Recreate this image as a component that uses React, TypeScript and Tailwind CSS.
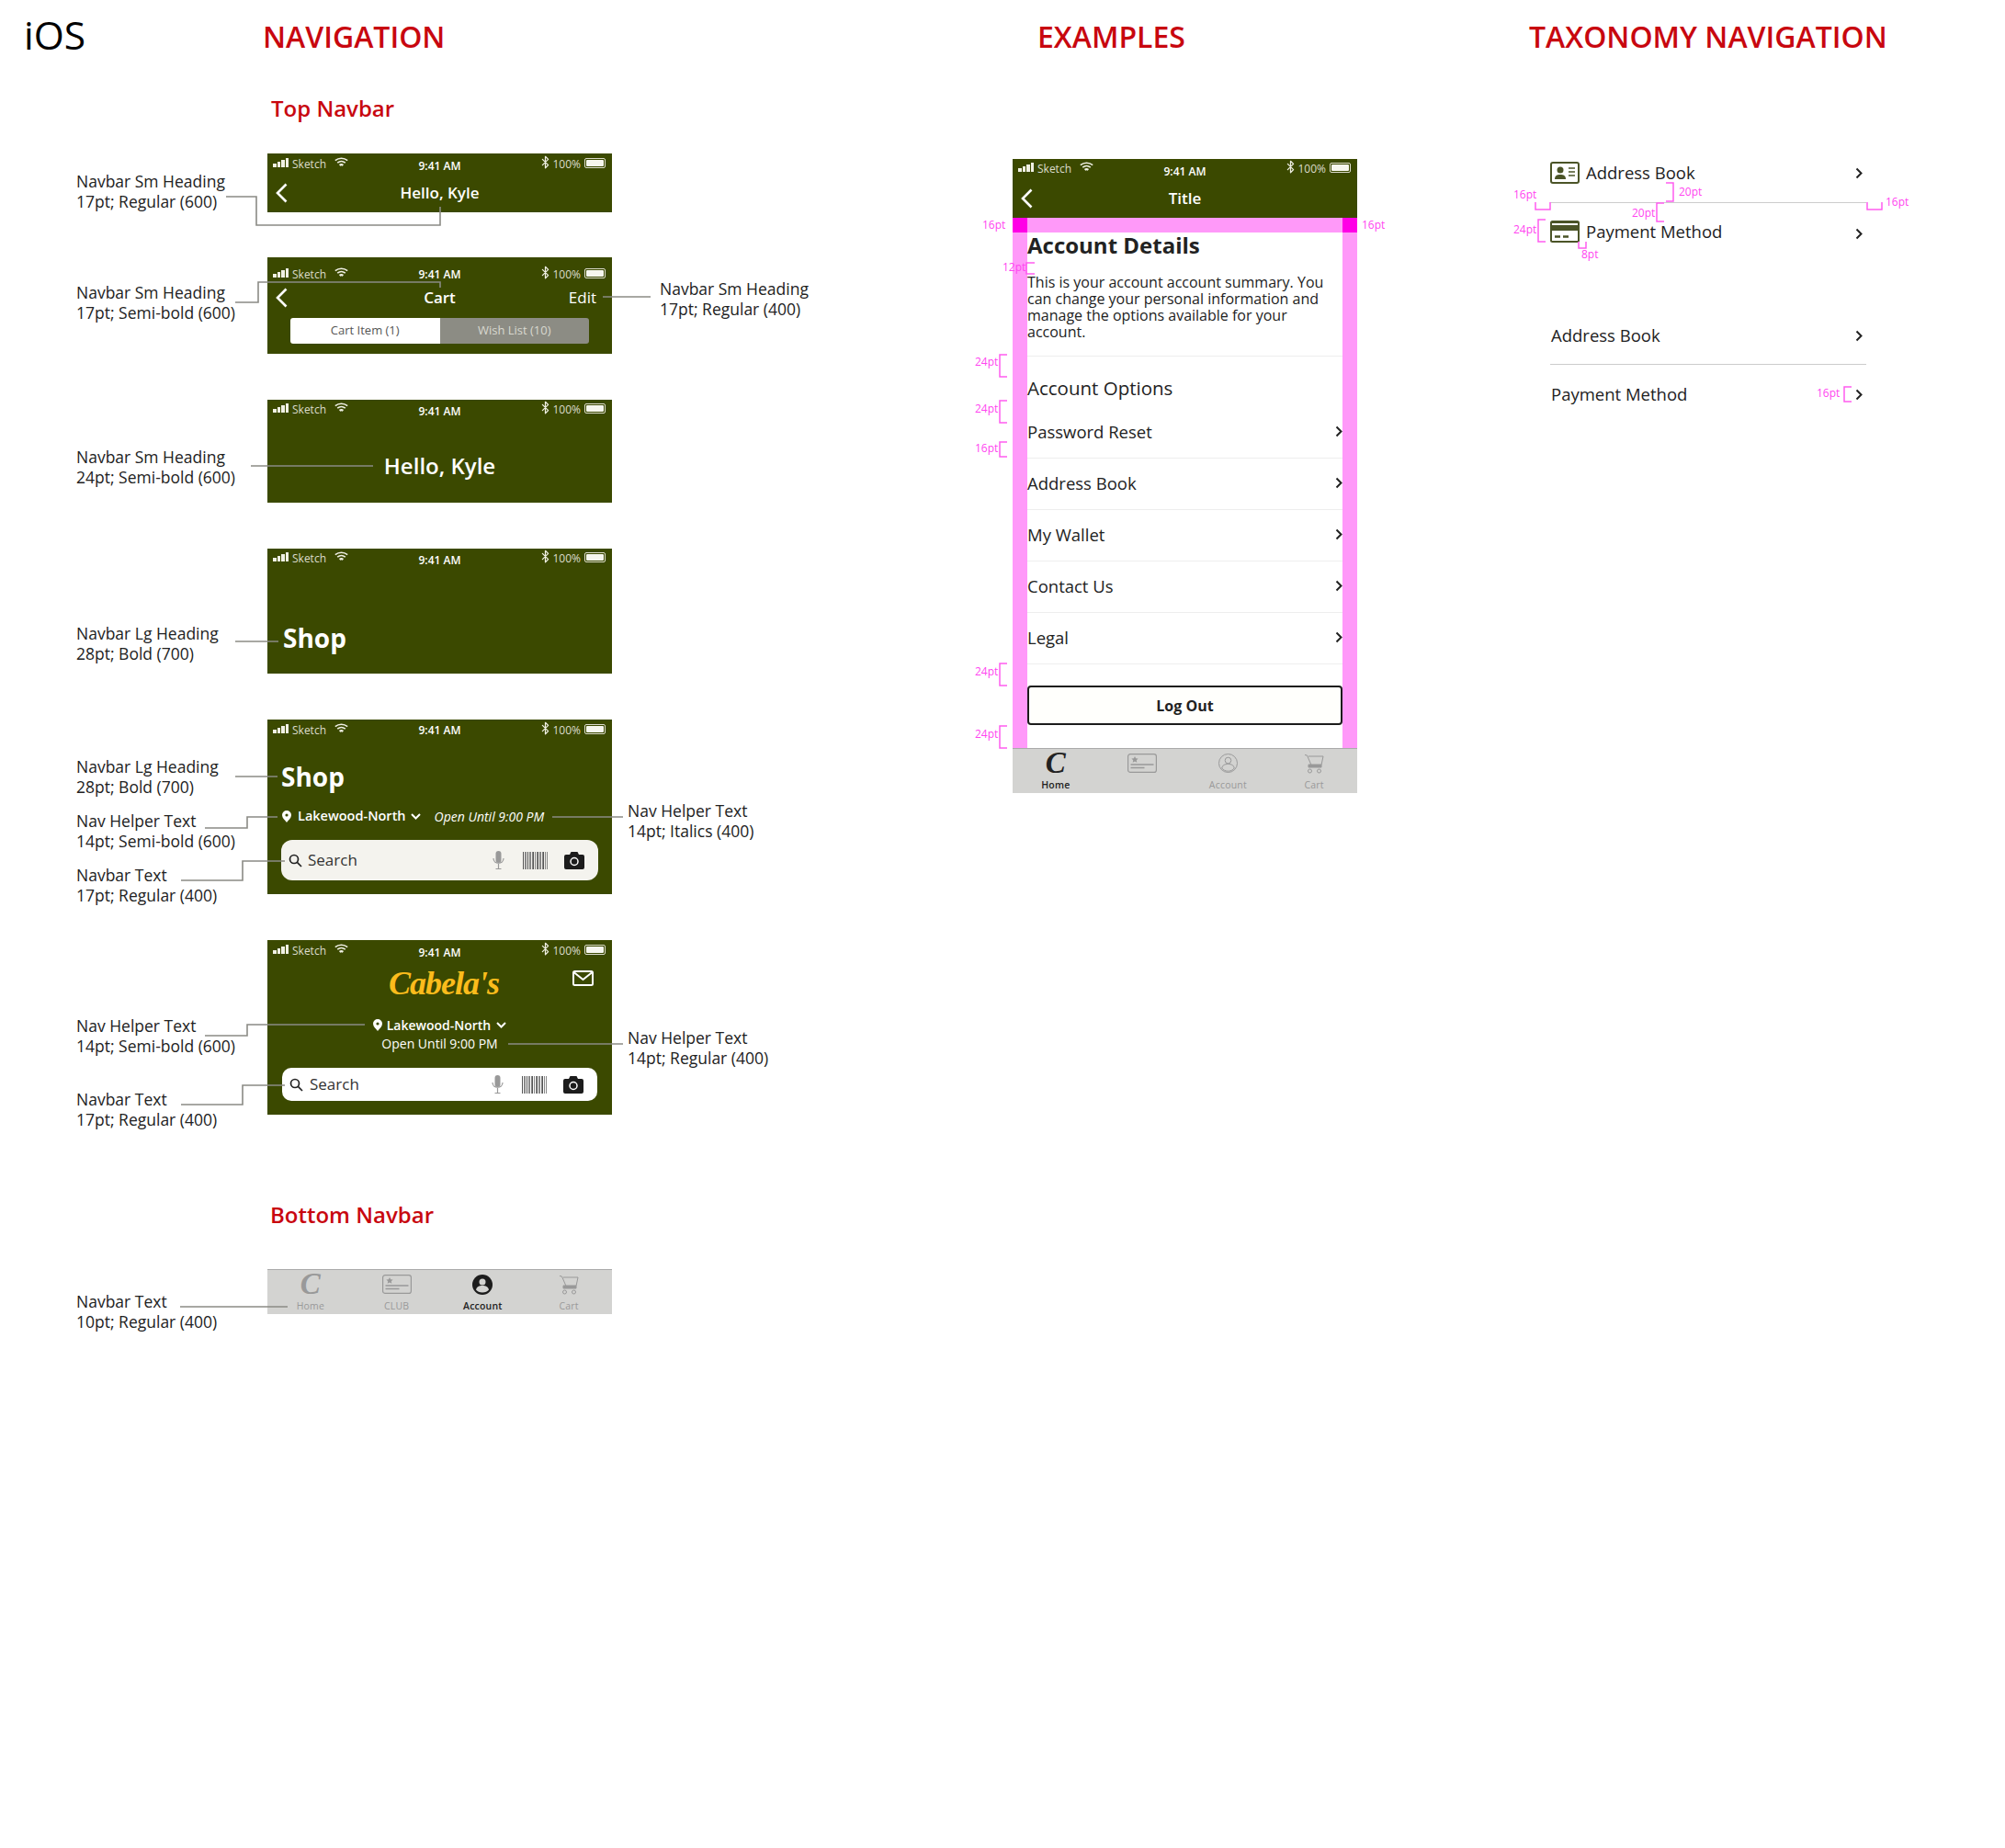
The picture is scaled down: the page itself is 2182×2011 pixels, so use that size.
import { Bluetooth } from 'lucide-react';
import { ReactNode } from 'react';

const LEADERS = [
  '246,214 279,214 279,245 479,245 479,225',
  '256,329 281,329 281,307 479,307 479,313',
  '656,323 708,323',
  '273,507 406,507',
  '256,698 303,698',
  '256,845 302,845',
  '223,901 269,901 269,889 302,889',
  '197,958 264,958 264,937 310,937',
  '601,889 678,889',
  '223,1127 269,1127 269,1115 397,1115',
  '197,1202 264,1202 264,1181 310,1181',
  '553,1136 678,1136',
  '196,1422 313,1422',
];

const BRACKETS = [
  'M1126 286H1117V298H1126',
  'M1096 386H1088V410H1096',
  'M1096 436H1088V460H1096',
  'M1096 481H1088V497H1096',
  'M1096 722H1088V746H1096',
  'M1096 790H1088V814H1096',
  'M1671 220V228H1687V220',
  'M1813 199H1821V219H1813',
  'M1811 221H1803V241H1811',
  'M2032 220V228H2048V220',
  'M1682 239H1674V263H1682',
  'M1718 263V270H1726V263',
  'M2015 421H2007V437H2015',
];

const ACCOUNT_ROWS = ['Password Reset', 'Address Book', 'My Wallet', 'Contact Us', 'Legal'];
const BARCODE = [2, 1, 1, 2, 1, 1, 1, 2, 1, 1, 2, 1, 1, 1, 2, 1, 1];

function Chevron({ className = '' }: { className?: string }) {
  return (
    <svg width="8" height="13" viewBox="0 0 8 13" className={className}>
      <path d="M1.5 1.5 6.5 6.5 1.5 11.5" fill="none" stroke="#222" strokeWidth="2" />
    </svg>
  );
}

function BackArrow() {
  return (
    <svg width="13" height="22" viewBox="0 0 13 22">
      <path d="M11.5 1.5 2 11l9.5 9.5" fill="none" stroke="#fff" strokeWidth="2.6" />
    </svg>
  );
}

function Wifi() {
  return (
    <svg width="15" height="11" viewBox="0 0 15 11" fill="none" stroke="#f0f0e4" strokeWidth="1.6">
      <path d="M.8 3.600c3.900-3.200 9.500-3.200 13.400 0" />
      <path d="M3.200 6.200c2.500-2 6.100-2 8.600 0" />
      <path d="M5.600 8.800c1.100-.8 2.700-.8 3.800 0" strokeWidth="2.200" />
    </svg>
  );
}

function StatusBar({ pad = 'pt-[2px]', time = 'mt-[2px]' }: { pad?: string; time?: string }) {
  return (
    <div className={`h-[24px] shrink-0 grid grid-cols-3 items-start text-[12px] text-[#dcdccc] ${pad}`}>
      <div className="flex items-center h-[20px] pl-[6px]">
        <div className="flex items-end gap-[1px] h-[10px] -mt-[4px]">
          <span className="w-[3.500px] h-[4px] bg-[#f0f0e4]" />
          <span className="w-[3.500px] h-[6px] bg-[#f0f0e4]" />
          <span className="w-[3.500px] h-[8px] bg-[#f0f0e4]" />
          <span className="w-[3.500px] h-[10px] bg-[#f0f0e4]" />
        </div>
        <span className="ml-[4px] leading-[20px]">Sketch</span>
        <span className="ml-[9px] -mt-[6px]"><Wifi /></span>
      </div>
      <div className={`text-center font-semibold text-white leading-[20px] ${time}`}>9:41 AM</div>
      <div className="flex items-center justify-end h-[20px] pr-[7px]">
        <Bluetooth size={15} strokeWidth={2} className="text-[#f0f0e4] -mt-[5px]" />
        <span className="leading-[20px]">100%</span>
        <span className="ml-[4px] -mt-[4px] w-[23px] h-[11px] border border-[#dcdccc] rounded-[2px] p-[1px]">
          <span className="block h-full bg-[#f6f6ee] rounded-[1px]" />
        </span>
      </div>
    </div>
  );
}

function Bar({ className, children }: { className: string; children: ReactNode }) {
  return <div className={`w-[375px] bg-[#3b4900] text-white flex flex-col ${className}`}>{children}</div>;
}

function SearchGlass() {
  return (
    <svg width="15" height="15" viewBox="0 0 15 15" fill="none" stroke="#222" strokeWidth="1.7">
      <circle cx="6" cy="6" r="4.5" />
      <path d="M9.4 9.4 14 14" />
    </svg>
  );
}

function SearchField({ className, text }: { className: string; text: string }) {
  return (
    <div className={`flex items-center text-[#333] ${className}`}>
      <SearchGlass />
      <span className={`text-[17px] ${text}`}>Search</span>
      <svg width="13" height="20" viewBox="0 0 13 20" className="ml-auto">
        <rect x="3.5" y="0" width="6" height="13" rx="3" fill="#999" />
        <path d="M1 8c0 7 11 7 11 0M6.5 14v5M3.5 19.500h6" fill="none" stroke="#999" strokeWidth="1.2" />
      </svg>
      <div className="ml-[20px] flex h-[19px] w-[26px] gap-[1px]">
        {BARCODE.map((w, i) => (
          <span key={i} className={w === 2 ? 'w-[1.5px] bg-[#555]' : 'w-[0.6px] bg-[#888]'} />
        ))}
      </div>
      <svg width="22" height="19" viewBox="0 0 22 19" className="ml-[19px]">
        <path d="M2 3h4l1.500-3h7L16 3h4a2 2 0 0 1 2 2v12a2 2 0 0 1-2 2H2a2 2 0 0 1-2-2V5a2 2 0 0 1 2-2z" fill="#1c1c1c" />
        <circle cx="11" cy="10.500" r="4" fill="none" stroke="#fff" strokeWidth="1.5" />
      </svg>
    </div>
  );
}

function Pin() {
  return (
    <svg width="10" height="13" viewBox="0 0 10 13">
      <path fillRule="evenodd" d="M5 0a5 5 0 0 1 5 5c0 3-3 5.500-5 8-2-2.500-5-5-5-8a5 5 0 0 1 5-5zm0 3.400a1.600 1.600 0 1 0 0 3.200 1.600 1.600 0 0 0 0-3.200z" fill="#fff" />
    </svg>
  );
}

function ChevronDown() {
  return (
    <svg width="11" height="7" viewBox="0 0 11 7">
      <path d="M1 1l4.500 4.500L10 1" fill="none" stroke="#fff" strokeWidth="2" />
    </svg>
  );
}

function ClubIcon({ color }: { color: string }) {
  return (
    <svg width="32" height="21" viewBox="0 0 32 21" fill="none" stroke={color}>
      <rect x="0.600" y="0.600" width="30.800" height="19.800" rx="2.500" strokeWidth="1.200" />
      <path d="M3.500 12h25" strokeWidth="1.500" />
      <path d="M3.500 15.500h15" strokeWidth="1.500" />
      <path d="M8 3l1.100 2.300 2.500.3-1.800 1.700.5 2.500L8 8.600 5.700 9.800l.5-2.500-1.800-1.700 2.500-.3z" fill={color} stroke="none" />
    </svg>
  );
}

function AccountIcon({ filled }: { filled?: boolean }) {
  if (filled) {
    return (
      <svg width="22" height="22" viewBox="0 0 22 22">
        <circle cx="11" cy="11" r="11" fill="#1c1c1c" />
        <circle cx="11" cy="8" r="3.500" fill="#d3d3d1" />
        <path d="M4 16.500c1-3.500 3.500-4.500 7-4.500s6 1 7 4.500c-1.500 2-4 3-7 3s-5.500-1-7-3z" fill="#d3d3d1" />
      </svg>
    );
  }
  return (
    <svg width="21" height="21" viewBox="0 0 21 21" fill="none" stroke="#999" strokeWidth="1">
      <circle cx="10.500" cy="10.500" r="10" />
      <circle cx="10.500" cy="7.500" r="3.300" />
      <path d="M3.800 16c.5-3.500 3-4.500 6.700-4.500s6.200 1 6.700 4.500c-1.500 2-4 3.200-6.700 3.200s-5.200-1.200-6.700-3.200z" />
    </svg>
  );
}

function CartIcon() {
  return (
    <svg width="22" height="22" viewBox="0 0 22 22" fill="none" stroke="#999" strokeWidth="1">
      <path d="M1 1.500 3.500 2 8 12.500h11L21 3H5" />
      <path d="M5 12h14v3H5z" fill="#999" />
      <circle cx="6.500" cy="19" r="2" />
      <circle cx="16.500" cy="19" r="2" />
    </svg>
  );
}

function TabItem({ icon, label, active }: { icon: ReactNode; label?: string; active?: boolean }) {
  return (
    <div className="flex flex-col items-center">
      <div className="h-[27px] flex items-center justify-center">{icon}</div>
      <span className={`mt-[3px] text-[10.500px] leading-[14px] tracking-[0.2px] ${active ? 'font-semibold text-[#222]' : 'text-[#999]'}`}>{label ?? '\u00a0'}</span>
    </div>
  );
}

function BrandC({ color }: { color: string }) {
  return <span className={`font-['Liberation_Serif',serif] italic font-bold text-[33px] leading-[25px] ${color}`}>C</span>;
}

function TabBar({ active, hideClub }: { active: 'home' | 'account'; hideClub?: boolean }) {
  return (
    <div className="h-[49px] w-[375px] bg-[#d3d3d1] border-t border-[#aaa] grid grid-cols-4 pt-[2px]">
      <TabItem icon={<BrandC color={active === 'home' ? 'text-[#222]' : 'text-[#999]'} />} label="Home" active={active === 'home'} />
      <TabItem icon={<ClubIcon color="#999" />} label={hideClub ? undefined : 'CLUB'} />
      <TabItem icon={<AccountIcon filled={active === 'account'} />} label="Account" active={active === 'account'} />
      <TabItem icon={<CartIcon />} label="Cart" />
    </div>
  );
}

function Callout({ className, lines }: { className: string; lines: [string, string] }) {
  return (
    <div className={`absolute text-[17.500px] leading-[22px] text-[#222] whitespace-nowrap ${className}`}>
      <div>{lines[0]}</div>
      <div>{lines[1]}</div>
    </div>
  );
}

function Spec({ className, children }: { className: string; children: ReactNode }) {
  return <span className={`absolute text-[12px] leading-[14px] text-[#ff45f0] ${className}`}>{children}</span>;
}

function TaxonomyRow({ icon, label, className = '', chevron = '' }: { icon?: ReactNode; label: string; className?: string; chevron?: string }) {
  return (
    <div className={`flex items-center text-[18.500px] text-[#222] ${className}`}>
      {icon}
      <span className={icon ? 'ml-[7px]' : 'ml-[1px]'}>{label}</span>
      <Chevron className={`ml-auto mr-[4px] ${chevron}`} />
    </div>
  );
}

export default function App() {
  return (
    <div className="relative w-[2182px] h-[2011px] bg-white flex font-['Open_Sans',sans-serif] overflow-hidden">
      <div className="absolute left-[26px] top-[12px] text-[42.500px] leading-[52px] text-black">iOS</div>

      {/* navigation column */}
      <div className="w-[1102px] shrink-0 pl-[291px] pt-[18px] flex flex-col items-start">
        <h1 className="-ml-[5px] text-[32px] leading-[44px] font-semibold text-[#c8070f]">NAVIGATION</h1>
        <h2 className="ml-[4px] mt-[40px] text-[24px] leading-[32px] font-semibold text-[#c8070f]">Top Navbar</h2>

        <Bar className="h-[64px] mt-[33px]">
          <StatusBar />
          <div className="h-[38px] grid grid-cols-[1fr_auto_1fr] items-center">
            <div className="pl-[9px] flex"><BackArrow /></div>
            <span className="text-[17px] font-semibold">Hello, Kyle</span>
          </div>
        </Bar>

        <Bar className="h-[105px] mt-[49px]">
          <StatusBar pad="pt-[9px]" time="mt-0" />
          <div className="h-[38px] mt-[1px] grid grid-cols-[1fr_auto_1fr] items-center">
            <div className="pl-[9px] flex"><BackArrow /></div>
            <span className="text-[17px] font-semibold">Cart</span>
            <span className="text-[17px] text-right pr-[17px]">Edit</span>
          </div>
          <div className="mx-[25px] mt-[3px] h-[28px] grid grid-cols-2 text-[13px] rounded-[3px] overflow-hidden">
            <div className="bg-white text-[#555] flex items-center justify-center">Cart Item (1)</div>
            <div className="bg-[#8c8c84] text-[#d9d9d0] flex items-center justify-center">Wish List (10)</div>
          </div>
        </Bar>

        <Bar className="h-[112px] mt-[50px]">
          <StatusBar pad="pt-[1px]" />
          <div className="flex-1 pt-[8px] flex items-center justify-center text-[24px] font-semibold">Hello, Kyle</div>
        </Bar>

        <Bar className="h-[136px] mt-[50px]">
          <StatusBar pad="pt-[1px]" />
          <div className="mt-[54px] pl-[17px] text-[28px] leading-[38px] font-bold">Shop</div>
        </Bar>

        <Bar className="h-[190px] mt-[50px]">
          <StatusBar time="mt-0" />
          <div className="mt-[19px] pl-[15px] text-[28px] leading-[38px] font-bold">Shop</div>
          <div className="mt-[14px] h-[20px] pl-[16px] flex items-center text-[14.500px]">
            <Pin />
            <span className="ml-[7px] font-semibold">Lakewood-North</span>
            <span className="ml-[5px]"><ChevronDown /></span>
            <span className="ml-[15px] italic text-[14px]">Open Until 9:00 PM</span>
          </div>
          <SearchField className="mt-[16px] mx-[15px] h-[44px] rounded-[12px] bg-[#f4f3ee] pl-[8px] pr-[15px]" text="ml-[6px]" />
        </Bar>

        <Bar className="h-[190px] mt-[50px]">
          <StatusBar />
          <div className="mt-[5px] h-[36px] grid grid-cols-[1fr_auto_1fr] items-center">
            <span />
            <span className="pl-[9px] font-['Liberation_Serif',serif] italic font-bold text-[36px] tracking-[-1px] leading-[36px] text-[#fbbc1c]">Cabela's</span>
            <div className="flex justify-end pr-[20px] -mt-[11px]">
              <svg width="23" height="17" viewBox="0 0 23 17" fill="none" stroke="#fff" strokeWidth="2">
                <rect x="1" y="1" width="21" height="15" rx="1.500" />
                <path d="M1.500 2 11.500 10 21.500 2" />
              </svg>
            </div>
          </div>
          <div className="mt-[17px] h-[20px] flex items-center justify-center text-[14px]">
            <Pin />
            <span className="ml-[5px] font-semibold">Lakewood-North</span>
            <span className="ml-[6px]"><ChevronDown /></span>
          </div>
          <div className="mt-[1px] h-[20px] text-center text-[14px] leading-[20px]">Open Until 9:00 PM</div>
          <SearchField className="mt-[16px] mx-[16px] h-[36px] rounded-[10px] bg-white pl-[8px] pr-[15px]" text="ml-[7px]" />
        </Bar>

        <h2 className="ml-[3px] mt-[93px] text-[24px] leading-[32px] font-semibold text-[#c8070f]">Bottom Navbar</h2>
        <div className="mt-[43px]"><TabBar active="account" /></div>
      </div>

      {/* examples column */}
      <div className="w-[585px] shrink-0 pt-[18px] flex flex-col items-start">
        <h1 className="ml-[27px] text-[32px] leading-[44px] font-semibold text-[#c8070f]">EXAMPLES</h1>
        <div className="mt-[111px] w-[375px] relative">
          <Bar className="h-[64px]">
            <StatusBar pad="pt-[1px]" time="mt-[3px]" />
            <div className="h-[38px] grid grid-cols-[1fr_auto_1fr] items-center">
              <div className="pl-[9px] flex"><BackArrow /></div>
              <span className="text-[17px] font-semibold">Title</span>
            </div>
          </Bar>
          <div className="h-[577px] border-x-[16px] border-t-[16px] border-[#ff99f9] text-[#222]">
            <h3 className="text-[24px] leading-[28px] font-bold">Account Details</h3>
            <p className="mt-[17px] text-[16px] leading-[18px]">This is your account account summary. You can change your personal information and manage the options available for your account.</p>
            <div className="mt-[17px] border-t border-[#eee]" />
            <h4 className="mt-[21px] text-[20.500px] leading-[27px] font-medium">Account Options</h4>
            <div className="mt-[7px]">
              {ACCOUNT_ROWS.map((row) => (
                <div key={row} className="h-[56px] pb-[2px] flex items-center justify-between border-b border-[#eee] text-[18.500px] font-medium">
                  <span>{row}</span>
                  <Chevron />
                </div>
              ))}
            </div>
            <div className="mt-[23px] h-[43px] border-2 border-[#1c1c1c] rounded-[4px] bg-[#fffffc] flex items-center justify-center text-[16px] font-bold">Log Out</div>
          </div>
          <TabBar active="home" hideClub />
          <span className="absolute left-0 top-[64px] w-[16px] h-[16px] bg-[#ff00e6]" />
          <span className="absolute right-0 top-[64px] w-[16px] h-[16px] bg-[#ff00e6]" />
        </div>
      </div>

      {/* taxonomy column */}
      <div className="flex-1 pt-[18px] flex flex-col items-start">
        <h1 className="-ml-[23px] text-[32px] leading-[44px] font-semibold text-[#c8070f] whitespace-nowrap">TAXONOMY NAVIGATION</h1>
        <div className="w-[344px] mt-[114px]">
          <TaxonomyRow
            label="Address Book"
            className="h-[24px]"
            icon={
              <svg width="32" height="24" viewBox="0 0 32 24">
                <rect x="1" y="1" width="30" height="22" rx="2" fill="#fff" stroke="#4b5427" strokeWidth="2" />
                <circle cx="11" cy="9" r="3.500" fill="#4b5427" />
                <path d="M5 19c0-4 2.500-5 6-5s6 1 6 5z" fill="#4b5427" />
                <path d="M20 7h7M20 11h7M20 15h7" stroke="#4b5427" strokeWidth="1.500" />
              </svg>
            }
          />
          <div className="mt-[20px] border-t border-[#ccc]" />
          <TaxonomyRow
            label="Payment Method"
            className="mt-[19px] h-[24px]"
            chevron="mt-[4px]"
            icon={
              <svg width="32" height="24" viewBox="0 0 32 24">
                <rect width="32" height="24" rx="2.500" fill="#4b5427" />
                <rect x="2" y="3" width="28" height="2" fill="#fff" />
                <rect x="2" y="11" width="28" height="11" fill="#fff" />
                <path d="M5 17.500h6M14 17.500h6" stroke="#4b5427" strokeWidth="2.500" />
              </svg>
            }
          />
          <TaxonomyRow label="Address Book" className="mt-[89px] h-[24px]" />
          <div className="mt-[19px] border-t border-[#ccc]" />
          <TaxonomyRow label="Payment Method" className="mt-[20px] h-[24px]" />
        </div>
      </div>

      {/* leader lines and redline brackets sit over the mocks */}
      <svg className="absolute inset-0 pointer-events-none" width="2182" height="2011" fill="none">
        {LEADERS.map((p) => (
          <polyline key={p} points={p} stroke="#8b8b85" strokeWidth="1.600" />
        ))}
        {BRACKETS.map((d) => (
          <path key={d} d={d} stroke="#ff5cf0" strokeWidth="1.500" />
        ))}
      </svg>

      <Callout className="left-[83px] top-[186px]" lines={['Navbar Sm Heading', '17pt; Regular (600)']} />
      <Callout className="left-[83px] top-[307px]" lines={['Navbar Sm Heading', '17pt; Semi-bold (600)']} />
      <Callout className="left-[718px] top-[303px]" lines={['Navbar Sm Heading', '17pt; Regular (400)']} />
      <Callout className="left-[83px] top-[486px]" lines={['Navbar Sm Heading', '24pt; Semi-bold (600)']} />
      <Callout className="left-[83px] top-[678px]" lines={['Navbar Lg Heading', '28pt; Bold (700)']} />
      <Callout className="left-[83px] top-[823px]" lines={['Navbar Lg Heading', '28pt; Bold (700)']} />
      <Callout className="left-[83px] top-[882px]" lines={['Nav Helper Text', '14pt; Semi-bold (600)']} />
      <Callout className="left-[83px] top-[941px]" lines={['Navbar Text', '17pt; Regular (400)']} />
      <Callout className="left-[683px] top-[871px]" lines={['Nav Helper Text', '14pt; Italics (400)']} />
      <Callout className="left-[83px] top-[1105px]" lines={['Nav Helper Text', '14pt; Semi-bold (600)']} />
      <Callout className="left-[83px] top-[1185px]" lines={['Navbar Text', '17pt; Regular (400)']} />
      <Callout className="left-[683px] top-[1118px]" lines={['Nav Helper Text', '14pt; Regular (400)']} />
      <Callout className="left-[83px] top-[1405px]" lines={['Navbar Text', '10pt; Regular (400)']} />

      <Spec className="left-[1069px] top-[238px]">16pt</Spec>
      <Spec className="left-[1482px] top-[238px]">16pt</Spec>
      <Spec className="left-[1091px] top-[284px]">12pt</Spec>
      <Spec className="left-[1061px] top-[387px]">24pt</Spec>
      <Spec className="left-[1061px] top-[438px]">24pt</Spec>
      <Spec className="left-[1061px] top-[481px]">16pt</Spec>
      <Spec className="left-[1061px] top-[724px]">24pt</Spec>
      <Spec className="left-[1061px] top-[792px]">24pt</Spec>
      <Spec className="left-[1647px] top-[205px]">16pt</Spec>
      <Spec className="left-[1827px] top-[202px]">20pt</Spec>
      <Spec className="left-[1776px] top-[225px]">20pt</Spec>
      <Spec className="left-[2052px] top-[213px]">16pt</Spec>
      <Spec className="left-[1647px] top-[243px]">24pt</Spec>
      <Spec className="left-[1721px] top-[270px]">8pt</Spec>
      <Spec className="left-[1977px] top-[421px]">16pt</Spec>
    </div>
  );
}
